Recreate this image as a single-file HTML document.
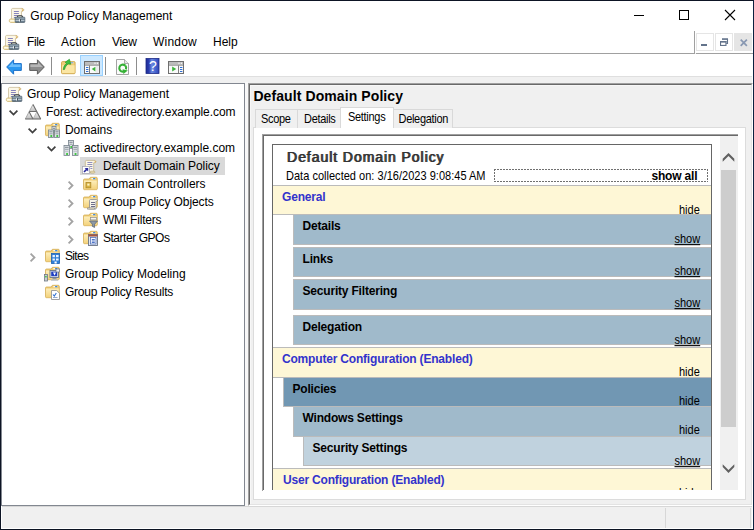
<!DOCTYPE html>
<html><head><meta charset="utf-8"><title>Group Policy Management</title>
<style>
*{box-sizing:border-box;margin:0;padding:0}
html,body{width:754px;height:530px;overflow:hidden;background:#f0f0f0}
body{font-family:"Liberation Sans",sans-serif;font-size:12px;color:#000;position:relative}
.a{position:absolute}
.t{position:absolute;white-space:pre;line-height:14px;height:14px}
svg{position:absolute;overflow:visible}
#win{position:absolute;left:0;top:0;width:754px;height:530px;border:1px solid;border-color:#0d1424 #0b2140 #0b1322 #0d1424;background:#f0f0f0}
/* coordinates below are relative to page (use #pg offset -1) */
#pg{position:absolute;left:-1px;top:-1px;width:754px;height:530px}
.white{background:#fff}
.mi{font-size:12px}
.tr{font-size:12px}
.tab{position:absolute;top:109px;height:19px;background:#f0f0f0;border:1px solid #d9d9d9;border-bottom:none;font-size:11px}
.tabt{position:absolute;white-space:pre;font-size:11px;line-height:13px;letter-spacing:-0.3px;transform:scaleY(1.08);transform-origin:0 10.1px}
.h0{position:absolute;left:273px;width:438px;background:#fef7d6;border-top:1px solid #bbb;border-bottom:1px solid #bbb}
.h1{position:absolute;background:#a0bacb;border:1px solid #bbb;border-right:none}
.ht{position:absolute;white-space:pre;font-size:12px;font-weight:bold;line-height:13px;letter-spacing:-0.19px}
.hl{position:absolute;white-space:pre;font-size:11px;line-height:13px;transform:scaleY(1.1);transform-origin:0 10.1px}
</style></head><body>
<div id="win"><div id="pg">

<div class="a" style="left:1px;top:1px;width:752px;height:528px;border:1px solid #fff"></div>
<!-- title bar -->
<div class="a white" style="left:1px;top:1px;width:752px;height:30px"></div>
<div class="t" style="left:30.3px;top:9.4px">Group Policy Management</div>
<svg style="left:9px;top:7px" width="16" height="16" viewBox="0 0 16 16" ><path d="M3.6 1.4h9.2c1.2 0 2 .6 2 1.5s-.8 1.5-2 1.5h-.3V13H2.5V2.6c0-.7 .5-1.2 1.1-1.2z" fill="#fcf7e6" stroke="#c9bd9b" stroke-width=".8"/><path d="M12.6 1.9c1 0 1.7 .4 1.7 1s-.6 1-1.4 1" fill="none" stroke="#d6a03c" stroke-width=".9"/><path d="M1.3 12h8.2v3.5H1.6c-.8 0-1.3-.7-1.3-1.75S.7 12 1.3 12z" fill="#f6e9bf" stroke="#cfb674" stroke-width=".8"/><path d="M1.2 13.7h5.2" stroke="#fffdf0" stroke-width="1.1"/><path d="M4.9 4.5h5M4.9 6.5h5M4.9 8.5h4.2M4.9 10.5h2.4" stroke="#8784bd" stroke-width="1"/><path d="M8.5 10.2V9.8c0-.7 .6-1.1 1.2-1.1h2.6c.6 0 1.2 .4 1.2 1.1v.4" fill="none" stroke="#2f353b" stroke-width="1.1"/><rect x="6.2" y="10.2" width="9.6" height="5.2" rx=".6" fill="#6f8393" stroke="#4f606d" stroke-width=".8"/><rect x="6.6" y="10.6" width="8.8" height="1.6" fill="#8b9daa"/><rect x="6.6" y="13" width="8.8" height="1" fill="#b4c1cb"/><rect x="10.1" y="12.2" width="1" height="2.3" fill="#f2f5f7"/><rect x="11.1" y="12.2" width=".9" height="2.3" fill="#39444d"/></svg>
<!-- caption buttons -->
<div class="a" style="left:634px;top:15px;width:10px;height:1px;background:#000"></div>
<div class="a" style="left:679px;top:10px;width:10px;height:10px;border:1px solid #000"></div>
<svg style="left:725px;top:10px" width="10" height="10"><path d="M0 0L10 10M10 0L0 10" stroke="#000" stroke-width="1.1" fill="none"/></svg>

<!-- menu bar -->
<div class="a white" style="left:1px;top:31px;width:752px;height:22px"></div>
<div class="a" style="left:1px;top:53px;width:694px;height:1px;background:#a0a0a0"></div><div class="a" style="left:696px;top:53px;width:57px;height:1px;background:#a0a0a0"></div>
<div class="t mi" style="left:27px;top:35px;letter-spacing:-0.4px">File</div>
<div class="t mi" style="left:61px;top:35px;letter-spacing:0.25px">Action</div>
<div class="t mi" style="left:112px;top:35px;letter-spacing:-0.3px">View</div>
<div class="t mi" style="left:153px;top:35px;letter-spacing:0.2px">Window</div>
<div class="t mi" style="left:213px;top:35px">Help</div>

<div class="a" style="left:694px;top:31px;width:1px;height:23px;background:#a0a0a0"></div>
<div class="a" style="left:696px;top:33px;width:18px;height:18px;border:1px solid #e5e5e5;background:#fff"></div>
<div class="a" style="left:701px;top:44px;width:6px;height:2px;background:#63738b"></div>
<div class="a" style="left:715px;top:33px;width:18px;height:18px;border:1px solid #e5e5e5;background:#fff"></div>
<svg style="left:720px;top:38px" width="8" height="8" viewBox="0 0 8 8" ><path d="M2 1h6M7.5 1v4.5H6.2" fill="none" stroke="#63738b" stroke-width="1.1"/><path d="M2 .5h6v1.3H2z" fill="#63738b"/><rect x=".55" y="3.55" width="5.4" height="3.9" fill="none" stroke="#63738b" stroke-width="1.1"/><path d="M0 3h6.5v1.6H0z" fill="#63738b"/></svg>
<div class="a" style="left:734px;top:33px;width:18px;height:18px;background:#e5e5e5"></div>
<svg style="left:739.7px;top:39px" width="7.6" height="7.6" viewBox="0 0 7.6 7.6" ><path d="M.7 .7L6.9 6.9M6.9 .7L.7 6.9" stroke="#8898b2" stroke-width="1.7" fill="none"/></svg>
<svg style="left:3px;top:34px" width="16" height="16" viewBox="0 0 16 16" ><path d="M3.6 1.4h9.2c1.2 0 2 .6 2 1.5s-.8 1.5-2 1.5h-.3V13H2.5V2.6c0-.7 .5-1.2 1.1-1.2z" fill="#fcf7e6" stroke="#c9bd9b" stroke-width=".8"/><path d="M12.6 1.9c1 0 1.7 .4 1.7 1s-.6 1-1.4 1" fill="none" stroke="#d6a03c" stroke-width=".9"/><path d="M1.3 12h8.2v3.5H1.6c-.8 0-1.3-.7-1.3-1.75S.7 12 1.3 12z" fill="#f6e9bf" stroke="#cfb674" stroke-width=".8"/><path d="M1.2 13.7h5.2" stroke="#fffdf0" stroke-width="1.1"/><path d="M4.9 4.5h5M4.9 6.5h5M4.9 8.5h4.2M4.9 10.5h2.4" stroke="#8784bd" stroke-width="1"/><path d="M8.5 10.2V9.8c0-.7 .6-1.1 1.2-1.1h2.6c.6 0 1.2 .4 1.2 1.1v.4" fill="none" stroke="#2f353b" stroke-width="1.1"/><rect x="6.2" y="10.2" width="9.6" height="5.2" rx=".6" fill="#6f8393" stroke="#4f606d" stroke-width=".8"/><rect x="6.6" y="10.6" width="8.8" height="1.6" fill="#8b9daa"/><rect x="6.6" y="13" width="8.8" height="1" fill="#b4c1cb"/><rect x="10.1" y="12.2" width="1" height="2.3" fill="#f2f5f7"/><rect x="11.1" y="12.2" width=".9" height="2.3" fill="#39444d"/></svg>

<!-- toolbar -->
<div class="a white" style="left:1px;top:54px;width:752px;height:22px;border-bottom:0"></div><div class="a" style="left:2px;top:76px;width:750px;height:1px;background:#dfdfdf"></div>
<svg style="left:6px;top:58.6px" width="16" height="16" viewBox="0 0 16 16" ><path d="M7.6 .8L.7 8L7.6 15.2V11.4H15.3V4.6H7.6z" fill="#2a98f0" stroke="#1a6fc8" stroke-width="1" stroke-linejoin="round"/><path d="M7 3.2L2.4 8H14.6V5.6H7z" fill="#86ccff" opacity=".75"/></svg>
<svg style="left:29px;top:58.6px" width="16" height="16" viewBox="0 0 16 16" ><path d="M8.4 .8L15.3 8L8.4 15.2V11.4H.7V4.6H8.4z" fill="#8c8c8c" stroke="#5c5c5c" stroke-width="1" stroke-linejoin="round"/><path d="M9 3.2L13.6 8H1.4V5.6H9z" fill="#c4c4c4" opacity=".75"/></svg>
<div class="a" style="left:51px;top:57px;width:1px;height:18px;background:#8d8d8d"></div>
<svg style="left:61px;top:59px" width="16" height="16" viewBox="0 0 16 16" ><path d="M.5 3.5c0-.5 .4-.9 .9-.9h11.8c.5 0 .9 .4 .9 .9v10.3c0 .5-.4 .9-.9 .9H1.4c-.5 0-.9-.4-.9-.9z" fill="#f0cd78" stroke="#cfa84d" stroke-width=".9"/><path d="M1 6.2h12.6v7.4c0 .3-.2 .5-.5 .5H1.5c-.3 0-.5-.2-.5-.5z" fill="#fbe6a4"/><rect x="9.6" y="3.1" width="2.6" height="1.1" fill="#3d82d4"/><rect x="9" y="2.8" width="3.8" height="1.7" fill="#fff" opacity=".35"/><path d="M2.2 10.6C2.6 7.2 4 5.4 5.6 4.6L4.2 3.2L8.4 .3L9.8 5.2L7.4 4.9C5.8 5.6 4.2 7.6 3.6 10.4z" fill="#3fc03f" stroke="#2a962a" stroke-width=".7" stroke-linejoin="round"/></svg>
<div class="a" style="left:80px;top:55px;width:23px;height:21px;background:#cce8ff;border:1px solid #99d1ff"></div>
<svg style="left:84px;top:59px" width="16" height="16" viewBox="0 0 16 16" ><rect x=".5" y="2.5" width="15" height="12" fill="#fafafa" stroke="#6f6f6f" stroke-width="1"/><rect x="1" y="3" width="14" height="2.4" fill="#bdbdbd"/><path d="M1 6.1h14" stroke="#6f6f6f" stroke-width=".9"/><path d="M5.5 6.5v7.5" stroke="#6f6f6f" stroke-width=".9"/><path d="M2 8.5h2.4M2 10.5h2.4M2 12.5h2.4" stroke="#2f6fd6" stroke-width="1"/><path d="M11.4 7.8v4.6L7.7 10.1z" fill="#3cb43c"/><rect x="12" y="7" width="2.6" height="7" fill="#ececec"/><rect x="10.4" y="3.6" width="1.2" height="1.2" fill="#fff"/><rect x="12.8" y="3.6" width="1.2" height="1.2" fill="#fff"/></svg>
<div class="a" style="left:105px;top:57px;width:1px;height:18px;background:#8d8d8d"></div>
<svg style="left:114px;top:58.5px" width="16" height="16" viewBox="0 0 16 16" ><path d="M2.5 .5h8L14.5 4.5v11h-12z" fill="#fbfbfb" stroke="#9a9a9a" stroke-width=".9"/><path d="M10.5 .5v4h4" fill="#e6e6e6" stroke="#9a9a9a" stroke-width=".8"/><path d="M11.2 6.6A3.5 3.5 0 1 0 9.2 12.6" fill="none" stroke="#35b035" stroke-width="2.1"/><path d="M8.6 10.2L13.8 11.6L9.4 15z" fill="#35b035"/><path d="M11.2 6.6A3.5 3.5 0 0 1 11.9 10.4" fill="none" stroke="#35b035" stroke-width="2.1"/></svg>
<div class="a" style="left:136px;top:57px;width:1px;height:18px;background:#8d8d8d"></div>
<svg style="left:145px;top:58px" width="16" height="16" viewBox="0 0 16 16" ><linearGradient id="hg" x1="0" y1="0" x2="1" y2="0"><stop offset="0" stop-color="#1d2c96"/><stop offset=".22" stop-color="#2a3cae"/><stop offset=".45" stop-color="#6c8be2"/><stop offset=".7" stop-color="#4a68d0"/><stop offset="1" stop-color="#2f46b8"/></linearGradient><rect x="1" y=".5" width="13" height="15" fill="url(#hg)" stroke="#1c2a86" stroke-width=".8"/><text x="7.8" y="13" font-family="Liberation Sans, sans-serif" font-size="14" fill="#fff" text-anchor="middle">?</text></svg>
<svg style="left:168px;top:59px" width="16" height="16" viewBox="0 0 16 16" ><rect x=".5" y="2.5" width="15" height="12" fill="#fafafa" stroke="#6f6f6f" stroke-width="1"/><rect x="1" y="3" width="14" height="2.4" fill="#bdbdbd"/><path d="M1 6.1h14" stroke="#6f6f6f" stroke-width=".9"/><path d="M10.5 6.5v7.5" stroke="#6f6f6f" stroke-width=".9"/><path d="M12 8.5h2.4M12 10.5h2.4M12 12.5h2.4" stroke="#2f6fd6" stroke-width="1"/><path d="M4.2 7.6v5l4-2.5z" fill="#3cb43c"/><rect x="10.4" y="3.6" width="1.2" height="1.2" fill="#fff"/><rect x="12.8" y="3.6" width="1.2" height="1.2" fill="#fff"/></svg>

<!-- tree pane -->
<div class="a white" id="tree" style="left:1px;top:83px;width:244px;height:423px;border:1px solid #828790"></div>

<svg style="left:6px;top:86px" width="16" height="16" viewBox="0 0 16 16" ><path d="M3.6 1.4h9.2c1.2 0 2 .6 2 1.5s-.8 1.5-2 1.5h-.3V13H2.5V2.6c0-.7 .5-1.2 1.1-1.2z" fill="#fcf7e6" stroke="#c9bd9b" stroke-width=".8"/><path d="M12.6 1.9c1 0 1.7 .4 1.7 1s-.6 1-1.4 1" fill="none" stroke="#d6a03c" stroke-width=".9"/><path d="M1.3 12h8.2v3.5H1.6c-.8 0-1.3-.7-1.3-1.75S.7 12 1.3 12z" fill="#f6e9bf" stroke="#cfb674" stroke-width=".8"/><path d="M1.2 13.7h5.2" stroke="#fffdf0" stroke-width="1.1"/><path d="M4.9 4.5h5M4.9 6.5h5M4.9 8.5h4.2M4.9 10.5h2.4" stroke="#8784bd" stroke-width="1"/><path d="M8.5 10.2V9.8c0-.7 .6-1.1 1.2-1.1h2.6c.6 0 1.2 .4 1.2 1.1v.4" fill="none" stroke="#2f353b" stroke-width="1.1"/><rect x="6.2" y="10.2" width="9.6" height="5.2" rx=".6" fill="#6f8393" stroke="#4f606d" stroke-width=".8"/><rect x="6.6" y="10.6" width="8.8" height="1.6" fill="#8b9daa"/><rect x="6.6" y="13" width="8.8" height="1" fill="#b4c1cb"/><rect x="10.1" y="12.2" width="1" height="2.3" fill="#f2f5f7"/><rect x="11.1" y="12.2" width=".9" height="2.3" fill="#39444d"/></svg>
<div class="t tr" style="left:26.9px;top:87px">Group Policy Management</div>
<svg style="left:8.5px;top:109.5px" width="9" height="5" viewBox="0 0 9 5" ><path d="M.6 .6L4.5 4.5L8.4 .6" stroke="#404040" stroke-width="1.7" fill="none"/></svg>
<svg style="left:25px;top:104px" width="16" height="16" viewBox="0 0 16 16" ><linearGradient id="fg" x1="0" y1="0" x2="0" y2="1"><stop offset="0" stop-color="#f6f6f6"/><stop offset="1" stop-color="#bcbcbc"/></linearGradient><path d="M8 .4L11.9 7.7H4.1z" fill="url(#fg)"/><path d="M4.1 7.7L8 15H.3z" fill="url(#fg)"/><path d="M11.9 7.7L15.7 15H8z" fill="url(#fg)"/><path d="M8 .4L.3 15" stroke="#a9a9a9" stroke-width="1" fill="none"/><path d="M11.9 7.7L8 15" stroke="#b4b4b4" stroke-width=".9" fill="none"/><path d="M8 .4L15.7 15M4.1 7.7L8 15" stroke="#6c6c6c" stroke-width="1.1" fill="none"/><path d="M4.1 7.5H11.9" stroke="#6f6f6f" stroke-width="1"/><path d="M.2 15H15.8" stroke="#6f6f6f" stroke-width="1.1"/></svg>
<div class="t tr" style="left:45.9px;top:105px;letter-spacing:-0.065px">Forest: activedirectory.example.com</div>
<svg style="left:27.5px;top:127.5px" width="9" height="5" viewBox="0 0 9 5" ><path d="M.6 .6L4.5 4.5L8.4 .6" stroke="#404040" stroke-width="1.7" fill="none"/></svg>
<svg style="left:44px;top:122px" width="16" height="16" viewBox="0 0 16 16" ><g transform="translate(.5,0)"><linearGradient id="fo" x1="0" y1="0" x2="0" y2="1"><stop offset="0" stop-color="#fdeebb"/><stop offset="1" stop-color="#f3d27c"/></linearGradient><path d="M1 3.9c0-.5 .4-.9 .9-.9h4.7l1.3-1.7h6c.5 0 .9 .4 .9 .9v10.6c0 .5-.4 .9-.9 .9H1.9c-.5 0-.9-.4-.9-.9z" fill="#efcb72" stroke="#d4ae58" stroke-width=".8"/><path d="M1.5 4.6h12.8v8c0 .4-.3 .7-.7 .7H2.2c-.4 0-.7-.3-.7-.7z" fill="url(#fo)"/><rect x="8.8" y="2" width="4.2" height="1.3" fill="#fff" opacity=".85"/><rect x="10.6" y="2" width="2.2" height="1.3" fill="#3f8be0"/></g><rect x="8" y="4.5" width="4" height="6" fill="#dfe3e7" stroke="#77828c" stroke-width=".8"/><rect x="8.9" y="5.8" width="2.2" height="1" fill="#7d8790"/><rect x="8.9" y="7.8" width="2.2" height="1" fill="#99a2aa"/><rect x="9.4" y="8.1" width="1.8" height="1.8" fill="#2fc22f"/><rect x="4.5" y="8" width="5" height="7.5" fill="#dfe3e7" stroke="#77828c" stroke-width=".8"/><rect x="5.4" y="9.3" width="3.2" height="1" fill="#7d8790"/><rect x="5.4" y="11.3" width="3.2" height="1" fill="#99a2aa"/><rect x="6.4" y="13.1" width="1.8" height="1.8" fill="#2fc22f"/><rect x="10.5" y="8" width="5" height="7.5" fill="#dfe3e7" stroke="#77828c" stroke-width=".8"/><rect x="11.4" y="9.3" width="3.2" height="1" fill="#7d8790"/><rect x="11.4" y="11.3" width="3.2" height="1" fill="#99a2aa"/><rect x="12.4" y="13.1" width="1.8" height="1.8" fill="#2fc22f"/></svg>
<div class="t tr" style="left:64.9px;top:123px">Domains</div>
<svg style="left:46.5px;top:145.5px" width="9" height="5" viewBox="0 0 9 5" ><path d="M.6 .6L4.5 4.5L8.4 .6" stroke="#404040" stroke-width="1.7" fill="none"/></svg>
<svg style="left:63px;top:140px" width="16" height="16" viewBox="0 0 16 16" ><rect x="5.5" y="0.5" width="5" height="8" fill="#dfe3e7" stroke="#77828c" stroke-width=".8"/><rect x="6.4" y="1.8" width="3.2" height="1" fill="#7d8790"/><rect x="6.4" y="3.8" width="3.2" height="1" fill="#99a2aa"/><rect x="7.4" y="6.1" width="1.8" height="1.8" fill="#2fc22f"/><rect x="1" y="5.5" width="5.5" height="10" fill="#dfe3e7" stroke="#77828c" stroke-width=".8"/><rect x="1.9" y="6.8" width="3.7" height="1" fill="#7d8790"/><rect x="1.9" y="8.8" width="3.7" height="1" fill="#99a2aa"/><rect x="1.9" y="10.8" width="3.7" height=".9" fill="#b7bec5"/><rect x="3.15" y="13.1" width="1.8" height="1.8" fill="#2fc22f"/><rect x="9.5" y="5.5" width="5.5" height="10" fill="#dfe3e7" stroke="#77828c" stroke-width=".8"/><rect x="10.4" y="6.8" width="3.7" height="1" fill="#7d8790"/><rect x="10.4" y="8.8" width="3.7" height="1" fill="#99a2aa"/><rect x="10.4" y="10.8" width="3.7" height=".9" fill="#b7bec5"/><rect x="11.65" y="13.1" width="1.8" height="1.8" fill="#2fc22f"/></svg>
<div class="t tr" style="left:83.9px;top:141px">activedirectory.example.com</div>
<div class="a" style="left:80px;top:157px;width:145px;height:18px;background:#d9d9d9"></div>
<svg style="left:82px;top:158px" width="16" height="16" viewBox="0 0 16 16" ><path d="M4.3 2.4h8c1 0 1.5 .5 1.5 1.2s-.5 1.2-1.5 1.2h-.6V14.8H3.3V3.6c0-.7 .4-1.2 1-1.2z" fill="#fcf7e6" stroke="#c2b48e" stroke-width=".8"/><path d="M12.4 2.9c.8 0 1.3 .3 1.3 .8s-.4 .8-1 .8" fill="none" stroke="#d9a441" stroke-width=".8"/><path d="M5.4 4.5h5M5.4 6.5h5M8 8.5h2.4M8.4 10.5h2" stroke="#8f8ebf" stroke-width="1"/><path d="M8.6 13.2h3.4c.6 0 .9 .4 .9 .9s-.3 .9-.9 .9H8.6z" fill="#f3e6bd" stroke="#b9a878" stroke-width=".7"/><rect x=".4" y="8.4" width="7" height="7" fill="#fff" stroke="#a9a9b4" stroke-width=".8"/><path d="M2 14L5.4 10.6" stroke="#2b2b9c" stroke-width="1.6" fill="none"/><path d="M2.6 9.9H6.2V13.5z" fill="#2b2b9c"/></svg>
<div class="t tr" style="left:102.9px;top:159px;letter-spacing:-0.06px">Default Domain Policy</div>
<svg style="left:68px;top:180.5px" width="5" height="9" viewBox="0 0 5 9" ><path d="M.6 .6L4.5 4.5L.6 8.4" stroke="#a3a3a3" stroke-width="1.8" fill="none"/></svg>
<svg style="left:82px;top:176px" width="16" height="16" viewBox="0 0 16 16" ><g transform="translate(.5,0)"><linearGradient id="fo" x1="0" y1="0" x2="0" y2="1"><stop offset="0" stop-color="#fdeebb"/><stop offset="1" stop-color="#f3d27c"/></linearGradient><path d="M1 3.9c0-.5 .4-.9 .9-.9h4.7l1.3-1.7h6c.5 0 .9 .4 .9 .9v10.6c0 .5-.4 .9-.9 .9H1.9c-.5 0-.9-.4-.9-.9z" fill="#efcb72" stroke="#d4ae58" stroke-width=".8"/><path d="M1.5 4.6h12.8v8c0 .4-.3 .7-.7 .7H2.2c-.4 0-.7-.3-.7-.7z" fill="url(#fo)"/><rect x="8.8" y="2" width="4.2" height="1.3" fill="#fff" opacity=".85"/><rect x="10.6" y="2" width="2.2" height="1.3" fill="#3f8be0"/></g><rect x="4" y="6.4" width="4.8" height="5.4" fill="#d9b340" stroke="#b18a2c" stroke-width=".8"/><rect x="5.3" y="7.6" width="2.2" height="2" fill="#fff3c4"/></svg>
<div class="t tr" style="left:102.9px;top:177px">Domain Controllers</div>
<svg style="left:68px;top:198.5px" width="5" height="9" viewBox="0 0 5 9" ><path d="M.6 .6L4.5 4.5L.6 8.4" stroke="#a3a3a3" stroke-width="1.8" fill="none"/></svg>
<svg style="left:82px;top:194px" width="16" height="16" viewBox="0 0 16 16" ><g transform="translate(.5,0)"><linearGradient id="fo" x1="0" y1="0" x2="0" y2="1"><stop offset="0" stop-color="#fdeebb"/><stop offset="1" stop-color="#f3d27c"/></linearGradient><path d="M1 3.9c0-.5 .4-.9 .9-.9h4.7l1.3-1.7h6c.5 0 .9 .4 .9 .9v10.6c0 .5-.4 .9-.9 .9H1.9c-.5 0-.9-.4-.9-.9z" fill="#efcb72" stroke="#d4ae58" stroke-width=".8"/><path d="M1.5 4.6h12.8v8c0 .4-.3 .7-.7 .7H2.2c-.4 0-.7-.3-.7-.7z" fill="url(#fo)"/><rect x="8.8" y="2" width="4.2" height="1.3" fill="#fff" opacity=".85"/><rect x="10.6" y="2" width="2.2" height="1.3" fill="#3f8be0"/></g><path d="M8.5 5.5h6c.7 0 1 .4 1 .9s-.3 .9-1 .9h-.5V15H7.5V6.5c0-.6 .4-1 1-1z" fill="#f7f4ea" stroke="#8c8c8c" stroke-width=".8"/><path d="M9 8.5h4M9 10.5h4M9 12.5h4" stroke="#6d6d8a" stroke-width="1"/><path d="M5.5 13.8h7v1.4h-7z" fill="#ece4c6" stroke="#8c8c8c" stroke-width=".7"/></svg>
<div class="t tr" style="left:102.9px;top:195px;letter-spacing:-0.1px">Group Policy Objects</div>
<svg style="left:68px;top:216.5px" width="5" height="9" viewBox="0 0 5 9" ><path d="M.6 .6L4.5 4.5L.6 8.4" stroke="#a3a3a3" stroke-width="1.8" fill="none"/></svg>
<svg style="left:82px;top:212px" width="16" height="16" viewBox="0 0 16 16" ><g transform="translate(.5,0)"><linearGradient id="fo" x1="0" y1="0" x2="0" y2="1"><stop offset="0" stop-color="#fdeebb"/><stop offset="1" stop-color="#f3d27c"/></linearGradient><path d="M1 3.9c0-.5 .4-.9 .9-.9h4.7l1.3-1.7h6c.5 0 .9 .4 .9 .9v10.6c0 .5-.4 .9-.9 .9H1.9c-.5 0-.9-.4-.9-.9z" fill="#efcb72" stroke="#d4ae58" stroke-width=".8"/><path d="M1.5 4.6h12.8v8c0 .4-.3 .7-.7 .7H2.2c-.4 0-.7-.3-.7-.7z" fill="url(#fo)"/><rect x="8.8" y="2" width="4.2" height="1.3" fill="#fff" opacity=".85"/><rect x="10.6" y="2" width="2.2" height="1.3" fill="#3f8be0"/></g><rect x="8.5" y="5.5" width="6" height="2.4" fill="#f4f4f4" stroke="#8c8c8c" stroke-width=".7"/><path d="M7.5 9h8L12.6 12.2V15.4L10.4 14.4V12.2z" fill="#8f9aa6" stroke="#5d6873" stroke-width=".8" stroke-linejoin="round"/></svg>
<div class="t tr" style="left:102.9px;top:213px;letter-spacing:-0.2px">WMI Filters</div>
<svg style="left:68px;top:234.5px" width="5" height="9" viewBox="0 0 5 9" ><path d="M.6 .6L4.5 4.5L.6 8.4" stroke="#a3a3a3" stroke-width="1.8" fill="none"/></svg>
<svg style="left:82px;top:230px" width="16" height="16" viewBox="0 0 16 16" ><g transform="translate(.5,0)"><linearGradient id="fo" x1="0" y1="0" x2="0" y2="1"><stop offset="0" stop-color="#fdeebb"/><stop offset="1" stop-color="#f3d27c"/></linearGradient><path d="M1 3.9c0-.5 .4-.9 .9-.9h4.7l1.3-1.7h6c.5 0 .9 .4 .9 .9v10.6c0 .5-.4 .9-.9 .9H1.9c-.5 0-.9-.4-.9-.9z" fill="#efcb72" stroke="#d4ae58" stroke-width=".8"/><path d="M1.5 4.6h12.8v8c0 .4-.3 .7-.7 .7H2.2c-.4 0-.7-.3-.7-.7z" fill="url(#fo)"/><rect x="8.8" y="2" width="4.2" height="1.3" fill="#fff" opacity=".85"/><rect x="10.6" y="2" width="2.2" height="1.3" fill="#3f8be0"/></g><rect x="6.5" y="4.5" width="9" height="11" fill="#dfe6f2" stroke="#6a7485" stroke-width=".9"/><rect x="6.5" y="4.5" width="9" height="2" fill="#a8543c"/><rect x="8.5" y="7.5" width="5.5" height="6.5" fill="#f6f8fc" stroke="#5674b8" stroke-width=".8"/><path d="M9.8 9.5h3M9.8 11h3M9.8 12.5h3" stroke="#3b64c4" stroke-width=".9"/></svg>
<div class="t tr" style="left:102.9px;top:231px;letter-spacing:-0.45px">Starter GPOs</div>
<svg style="left:30px;top:252.5px" width="5" height="9" viewBox="0 0 5 9" ><path d="M.6 .6L4.5 4.5L.6 8.4" stroke="#a3a3a3" stroke-width="1.8" fill="none"/></svg>
<svg style="left:44px;top:248px" width="16" height="16" viewBox="0 0 16 16" ><g transform="translate(.5,0)"><linearGradient id="fo" x1="0" y1="0" x2="0" y2="1"><stop offset="0" stop-color="#fdeebb"/><stop offset="1" stop-color="#f3d27c"/></linearGradient><path d="M1 3.9c0-.5 .4-.9 .9-.9h4.7l1.3-1.7h6c.5 0 .9 .4 .9 .9v10.6c0 .5-.4 .9-.9 .9H1.9c-.5 0-.9-.4-.9-.9z" fill="#efcb72" stroke="#d4ae58" stroke-width=".8"/><path d="M1.5 4.6h12.8v8c0 .4-.3 .7-.7 .7H2.2c-.4 0-.7-.3-.7-.7z" fill="url(#fo)"/><rect x="8.8" y="2" width="4.2" height="1.3" fill="#fff" opacity=".85"/><rect x="10.6" y="2" width="2.2" height="1.3" fill="#3f8be0"/></g><rect x="7.5" y="5.5" width="8" height="10" fill="#2f7fd8" stroke="#1c5fb0" stroke-width=".8"/><path d="M8.5 7h2.4v2.2H8.5zM12 7h2.6v2.2H12zM8.5 10.4h2.4v2.2H8.5zM12 10.4h2.6v2.2H12z" fill="#e9f3ff"/><rect x="10.5" y="13.5" width="2.2" height="2" fill="#fff"/></svg>
<div class="t tr" style="left:64.9px;top:249px;letter-spacing:-0.65px">Sites</div>
<svg style="left:44px;top:266px" width="16" height="16" viewBox="0 0 16 16" ><g transform="translate(.5,0)"><linearGradient id="fo" x1="0" y1="0" x2="0" y2="1"><stop offset="0" stop-color="#fdeebb"/><stop offset="1" stop-color="#f3d27c"/></linearGradient><path d="M1 3.9c0-.5 .4-.9 .9-.9h4.7l1.3-1.7h6c.5 0 .9 .4 .9 .9v10.6c0 .5-.4 .9-.9 .9H1.9c-.5 0-.9-.4-.9-.9z" fill="#efcb72" stroke="#d4ae58" stroke-width=".8"/><path d="M1.5 4.6h12.8v8c0 .4-.3 .7-.7 .7H2.2c-.4 0-.7-.3-.7-.7z" fill="url(#fo)"/><rect x="8.8" y="2" width="4.2" height="1.3" fill="#fff" opacity=".85"/><rect x="10.6" y="2" width="2.2" height="1.3" fill="#3f8be0"/></g><rect x="6" y="4.5" width="8.5" height="7" fill="#dfe5ee" stroke="#6a7485" stroke-width=".9"/><rect x="7.2" y="5.6" width="6" height="4.6" fill="#1f3fc0"/><path d="M9 6.5h3l-1.4 3z" fill="#fff"/><rect x="8.5" y="12" width="4" height="1.2" fill="#8e98a6"/><rect x="7" y="13.4" width="7" height="1.3" fill="#b9c0c9"/><rect x=".5" y="8.5" width="3" height="6.5" fill="#c8cdd3" stroke="#6f7a84" stroke-width=".8"/><rect x="1.2" y="10" width="1.4" height="1.4" fill="#35c335"/><rect x="12" y="3" width="3.5" height="3" fill="#eef2f8" stroke="#6a7485" stroke-width=".7"/></svg>
<div class="t tr" style="left:64.9px;top:267px">Group Policy Modeling</div>
<svg style="left:44px;top:284px" width="16" height="16" viewBox="0 0 16 16" ><g transform="translate(.5,0)"><linearGradient id="fo" x1="0" y1="0" x2="0" y2="1"><stop offset="0" stop-color="#fdeebb"/><stop offset="1" stop-color="#f3d27c"/></linearGradient><path d="M1 3.9c0-.5 .4-.9 .9-.9h4.7l1.3-1.7h6c.5 0 .9 .4 .9 .9v10.6c0 .5-.4 .9-.9 .9H1.9c-.5 0-.9-.4-.9-.9z" fill="#efcb72" stroke="#d4ae58" stroke-width=".8"/><path d="M1.5 4.6h12.8v8c0 .4-.3 .7-.7 .7H2.2c-.4 0-.7-.3-.7-.7z" fill="url(#fo)"/><rect x="8.8" y="2" width="4.2" height="1.3" fill="#fff" opacity=".85"/><rect x="10.6" y="2" width="2.2" height="1.3" fill="#3f8be0"/></g><path d="M7.5 6.5h5.2l2.8 2.8v6.2h-8z" fill="#fff" stroke="#8c8c8c" stroke-width=".8"/><path d="M9 10.5l1.3 1.5 2-3" stroke="#2f6fd0" stroke-width="1.1" fill="none"/><path d="M9 13.5h4.5" stroke="#8aa0c8" stroke-width=".9"/></svg>
<div class="t tr" style="left:64.9px;top:285px;letter-spacing:-0.19px">Group Policy Results</div>

<!-- splitter -->
<div class="a" style="left:245px;top:82px;width:3px;height:424px;background:#f8f8f8"></div>
<!-- right pane -->
<div class="a" id="rp" style="left:248px;top:83px;width:505px;height:423px;border:1px solid;border-color:#a0a0a0 #fff #fff #a0a0a0"></div>
<div class="a" style="left:249px;top:84px;width:503px;height:421px;border:1px solid;border-color:#696969 #e3e3e3 #e3e3e3 #696969"></div>


<div class="a" style="left:250px;top:85px;width:501px;height:1px;background:#f7f7f7"></div><div class="a" style="left:250px;top:85px;width:1px;height:419px;background:#f7f7f7"></div>
<!-- header -->
<div class="t" id="hdr" style="left:253.4px;top:88px;font-size:14px;font-weight:bold;line-height:16px;height:16px;letter-spacing:0.09px">Default Domain Policy</div>

<!-- tab page -->
<div class="a white" style="left:253px;top:127px;width:493px;height:373px;border:1px solid #dcdcdc"></div>
<!-- tabs -->
<div class="tab" style="left:255px;width:43px"></div>
<div class="tab" style="left:297px;width:44px"></div>
<div class="tab" style="left:393px;width:60px"></div>
<div class="tab" style="left:340px;width:54px;top:107px;height:21px;background:#fff"></div>
<div class="tabt" style="left:261px;top:113px">Scope</div>
<div class="tabt" style="left:304px;top:113px">Details</div>
<div class="tabt" style="left:348px;top:111px">Settings</div>
<div class="tabt" style="left:398.5px;top:113px">Delegation</div>

<!-- browser control -->
<div class="a white" style="left:262px;top:134px;width:476px;height:356px"></div>
<div class="a" style="left:262px;top:134px;width:476px;height:1px;background:#a0a0a0"></div>
<div class="a" style="left:262px;top:134px;width:1px;height:357px;background:#a0a0a0"></div>
<div class="a" style="left:263px;top:135px;width:475px;height:1px;background:#696969"></div>
<div class="a" style="left:263px;top:135px;width:1px;height:355px;background:#696969"></div>
<div class="a" id="view" style="left:264px;top:136px;width:474px;height:354px;overflow:hidden">
<div class="a" id="doc" style="left:-264px;top:-136px;width:754px;height:530px">

<!-- report body -->
<div class="a" style="left:272px;top:144px;width:440px;height:400px;border:1px solid #666"></div>
<div class="t" id="rt" style="left:286.6px;top:149px;font-size:14px;font-weight:normal;line-height:16px;height:16px;color:#333;letter-spacing:0.94px;text-shadow:1px 0 0 #333">Default Domain Policy</div>
<div class="hl" id="dc" style="left:286px;top:169.5px;letter-spacing:0.02px">Data collected on: 3/16/2023 9:08:45 AM</div>
<div class="a" style="left:494px;top:169px;width:214px;height:1px;background:repeating-linear-gradient(90deg,#707070 0 2px,transparent 2px 3px)"></div><div class="a" style="left:494px;top:181px;width:214px;height:1px;background:repeating-linear-gradient(90deg,#707070 0 2px,transparent 2px 3px)"></div><div class="a" style="left:494px;top:169px;width:1px;height:13px;background:repeating-linear-gradient(180deg,#707070 0 2px,transparent 2px 3px)"></div><div class="a" style="left:707px;top:169px;width:1px;height:13px;background:repeating-linear-gradient(180deg,#707070 0 2px,transparent 2px 3px)"></div>
<div class="ht" style="left:651.5px;top:169.5px">show all</div>

<div class="h0" style="top:185px;height:30px"></div>
<div class="ht" style="left:282px;top:190.7px;color:#33c">General</div>
<div class="hl" style="left:679px;top:203.5px">hide</div>

<div class="h1" style="left:293px;width:418px;top:214px;height:31px"></div>
<div class="ht" style="left:302.5px;top:219.5px">Details</div>
<div class="hl" style="left:674.5px;top:232.5px;text-decoration:underline">show</div>

<div class="h1" style="left:293px;width:418px;top:247px;height:30px"></div>
<div class="ht" style="left:302.5px;top:253px">Links</div>
<div class="hl" style="left:674.5px;top:265px;text-decoration:underline">show</div>

<div class="h1" style="left:293px;width:418px;top:279px;height:31px"></div>
<div class="ht" style="left:302.5px;top:285.2px">Security Filtering</div>
<div class="hl" style="left:674.5px;top:297px;text-decoration:underline">show</div>

<div class="h1" style="left:293px;width:418px;top:315px;height:30px"></div>
<div class="ht" style="left:302.5px;top:321.2px">Delegation</div>
<div class="hl" style="left:674.5px;top:333.5px;text-decoration:underline">show</div>

<div class="h0" style="top:347px;height:31px"></div>
<div class="ht" style="left:282px;top:353px;color:#33c">Computer Configuration (Enabled)</div>
<div class="hl" style="left:679px;top:365.5px">hide</div>

<div class="h1" style="left:283px;width:428px;top:377px;height:30px;background:#7197b3"></div>
<div class="ht" style="left:292.5px;top:382.8px">Policies</div>
<div class="hl" style="left:679px;top:395px">hide</div>

<div class="h1" style="left:293px;width:418px;top:406px;height:31px"></div>
<div class="ht" style="left:302.5px;top:412.2px">Windows Settings</div>
<div class="hl" style="left:679px;top:424px">hide</div>

<div class="h1" style="left:303px;width:408px;top:436px;height:30px;background:#c0d2de"></div>
<div class="ht" style="left:312.5px;top:442.2px">Security Settings</div>
<div class="hl" style="left:674.5px;top:454.5px;text-decoration:underline">show</div>

<div class="h0" style="top:468px;height:31px"></div>
<div class="ht" style="left:283px;top:474.3px;color:#33c">User Configuration (Enabled)</div>
<div class="hl" style="left:679px;top:487px">hide</div>

<!-- scrollbar -->
<div class="a" style="left:720px;top:136px;width:18px;height:354px;background:#f0f0f0"></div>
<div class="a" style="left:721px;top:170px;width:15px;height:257px;background:#cdcdcd"></div>
<svg style="left:0;top:0" width="754" height="530"><path d="M728.5 153L734.3 158.8V161.7L728.5 155.9L722.7 161.7V158.8z" fill="#606060"/><path d="M728.5 472.9L734.3 467.1V464.2L728.5 470L722.7 464.2V467.1z" fill="#606060"/></svg>
</div></div>

<!-- status bar -->
<div class="a" style="left:2px;top:506px;width:750px;height:1px;background:#d7d7d7"></div>
<div class="a" style="left:665px;top:508px;width:1px;height:20px;background:#d7d7d7"></div>
<div class="a" style="left:750px;top:508px;width:1px;height:20px;background:#d7d7d7"></div>

</div></div>
</body></html>
